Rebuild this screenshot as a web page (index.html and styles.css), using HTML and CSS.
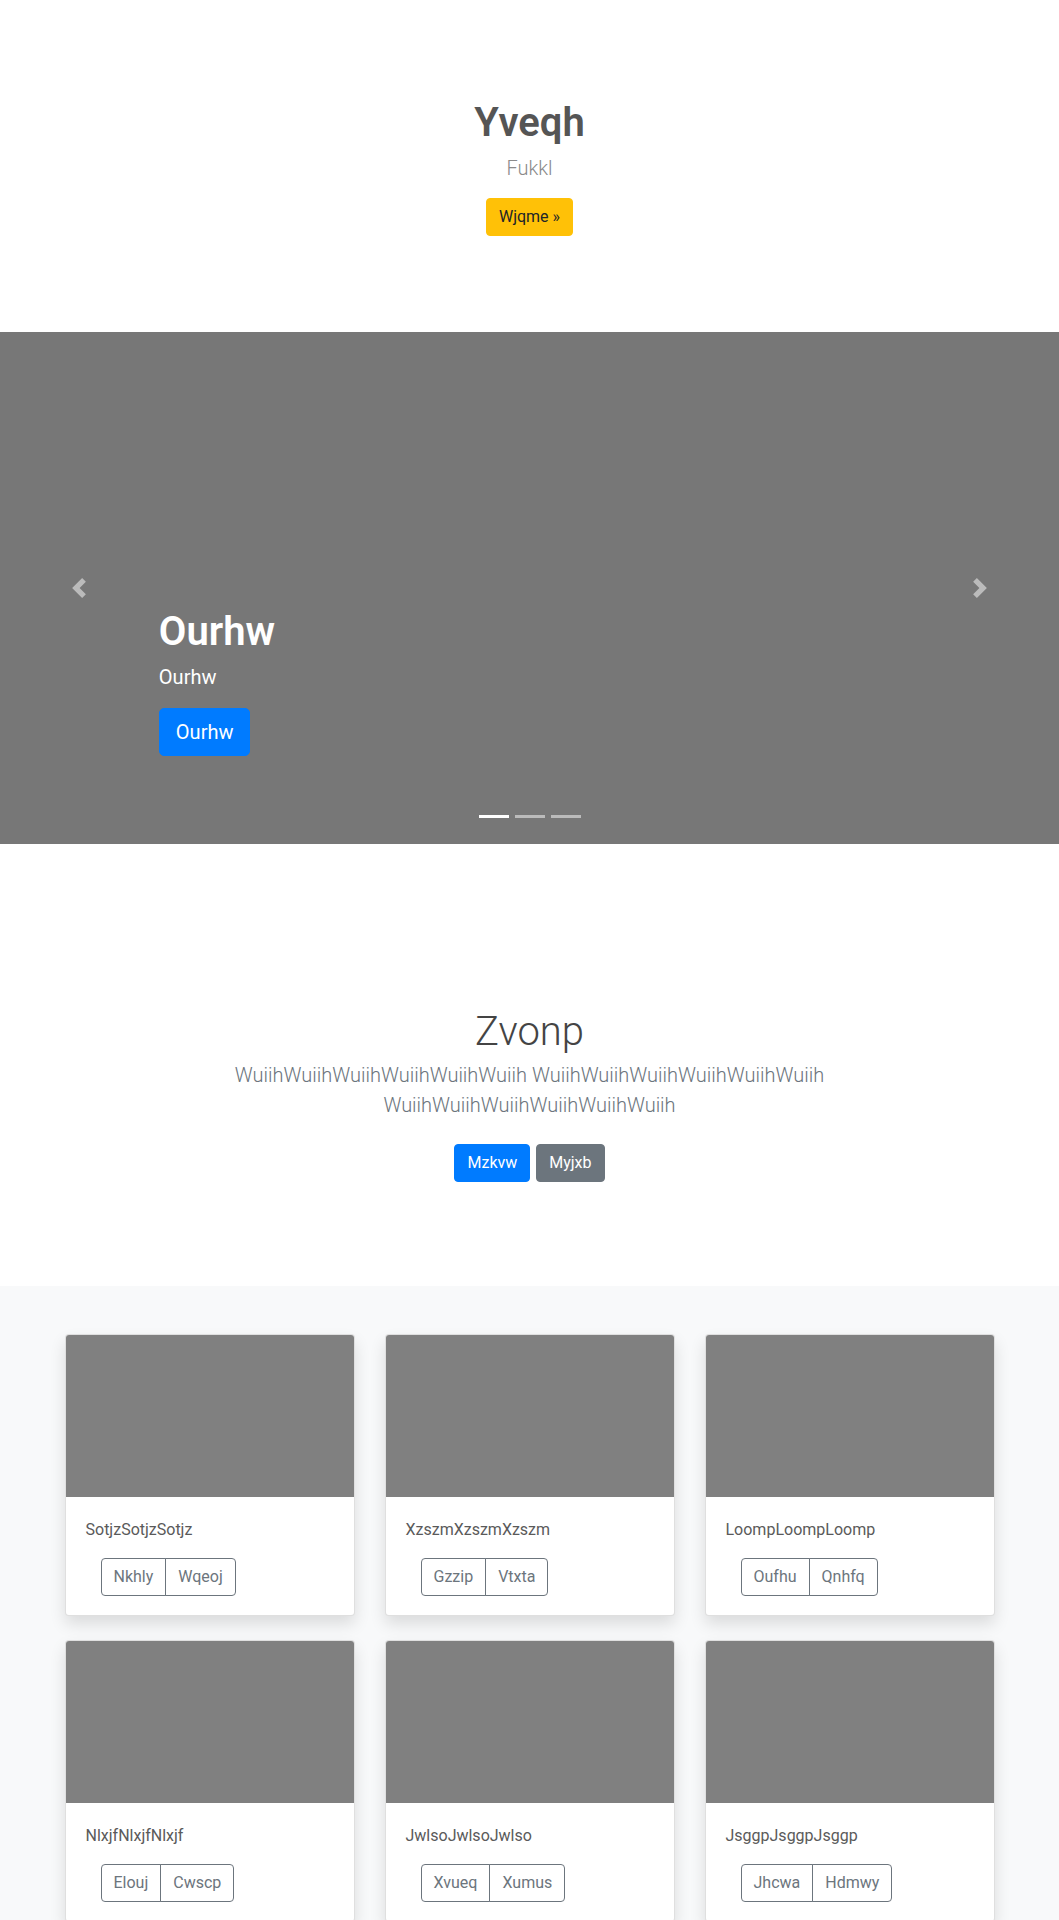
FILE: index.html
```html
<!DOCTYPE html>
<html lang="en">
<head>
<meta charset="utf-8">
<title>Yveqh</title>
<link rel="stylesheet" href="styles.css">
</head>
<body>
<header class="hero">
  <h1 class="hero-title">Yveqh</h1>
  <p class="hero-lead">Fukkl</p>
  <a class="btn btn-warning" href="#">Wjqme »</a>
</header>

<div class="carousel">
  <div class="carousel-slide"></div>
  <div class="carousel-caption">
    <h1 class="caption-title">Ourhw</h1>
    <p class="caption-text">Ourhw</p>
    <p class="caption-action"><a class="btn btn-lg btn-primary" href="#">Ourhw</a></p>
  </div>
  <a class="carousel-control prev" href="#">
    <svg width="20" height="20" viewBox="0 0 8 8" fill="#fff"><path d="M5.25 0l-4 4 4 4 1.5-1.5L4.25 4l2.5-2.5L5.25 0z"/></svg>
  </a>
  <a class="carousel-control next" href="#">
    <svg width="20" height="20" viewBox="0 0 8 8" fill="#fff"><path d="M2.75 0l-1.5 1.5L3.75 4l-2.5 2.5L2.75 8l4-4-4-4z"/></svg>
  </a>
  <ol class="carousel-indicators">
    <li class="active"></li>
    <li></li>
    <li></li>
  </ol>
</div>

<section class="intro">
  <div class="intro-inner">
    <h1 class="intro-title">Zvonp</h1>
    <p class="intro-lead">WuiihWuiihWuiihWuiihWuiihWuiih WuiihWuiihWuiihWuiihWuiihWuiih WuiihWuiihWuiihWuiihWuiihWuiih</p>
    <p class="intro-actions">
      <a class="btn btn-primary" href="#">Mzkvw</a>
      <a class="btn btn-secondary" href="#">Myjxb</a>
    </p>
  </div>
</section>

<section class="album">
  <div class="container">
    <div class="card-grid">
      <div class="card">
        <div class="card-img"></div>
        <div class="card-body">
          <p class="card-text">SotjzSotjzSotjz</p>
          <div class="btn-group"><a class="btn btn-outline" href="#">Nkhly</a><a class="btn btn-outline" href="#">Wqeoj</a></div>
        </div>
      </div>
      <div class="card">
        <div class="card-img"></div>
        <div class="card-body">
          <p class="card-text">XzszmXzszmXzszm</p>
          <div class="btn-group"><a class="btn btn-outline" href="#">Gzzip</a><a class="btn btn-outline" href="#">Vtxta</a></div>
        </div>
      </div>
      <div class="card">
        <div class="card-img"></div>
        <div class="card-body">
          <p class="card-text">LoompLoompLoomp</p>
          <div class="btn-group"><a class="btn btn-outline" href="#">Oufhu</a><a class="btn btn-outline" href="#">Qnhfq</a></div>
        </div>
      </div>
      <div class="card">
        <div class="card-img"></div>
        <div class="card-body">
          <p class="card-text">NlxjfNlxjfNlxjf</p>
          <div class="btn-group"><a class="btn btn-outline" href="#">Elouj</a><a class="btn btn-outline" href="#">Cwscp</a></div>
        </div>
      </div>
      <div class="card">
        <div class="card-img"></div>
        <div class="card-body">
          <p class="card-text">JwlsoJwlsoJwlso</p>
          <div class="btn-group"><a class="btn btn-outline" href="#">Xvueq</a><a class="btn btn-outline" href="#">Xumus</a></div>
        </div>
      </div>
      <div class="card">
        <div class="card-img"></div>
        <div class="card-body">
          <p class="card-text">JsggpJsggpJsggp</p>
          <div class="btn-group"><a class="btn btn-outline" href="#">Jhcwa</a><a class="btn btn-outline" href="#">Hdmwy</a></div>
        </div>
      </div>
    </div>
  </div>
</section>
</body>
</html>
```

FILE: styles.css
```css
* { box-sizing: border-box; }

body {
  margin: 0;
  font-family: Roboto, "Liberation Sans", sans-serif;
  font-size: 16px;
  line-height: 1.5;
  color: #212529;
  background: #fff;
}

h1, p { margin: 0; }

.btn {
  display: inline-block;
  font-weight: 400;
  font-size: 16px;
  line-height: 1.5;
  padding: 6px 12px;
  border: 1px solid transparent;
  border-radius: 4px;
  text-decoration: none;
  text-align: center;
  vertical-align: middle;
}
.btn-lg {
  font-size: 20px;
  padding: 8px 16px;
  border-radius: 5px;
}
.btn-warning { background: #ffc107; border-color: #ffc107; color: #212529; }
.btn-primary { background: #007bff; border-color: #007bff; color: #fff; }
.btn-secondary { background: #6c757d; border-color: #6c757d; color: #fff; }
.btn-outline { background: transparent; border-color: #6c757d; color: #6c757d; }

/* hero */
.hero {
  padding: 99px 15px 96px;
  text-align: center;
}
.hero-title {
  font-size: 40px;
  line-height: 1.2;
  font-weight: 600;
  color: #555;
  margin-bottom: 6px;
}
.hero-lead {
  font-size: 20px;
  font-weight: 300;
  line-height: 1.5;
  color: #8a8a8a;
  margin-bottom: 15px;
}

/* carousel */
.carousel {
  position: relative;
  height: 512px;
  overflow: hidden;
}
.carousel-slide {
  height: 100%;
  background: #777;
}
.carousel-caption {
  position: absolute;
  left: 15%;
  right: 15%;
  bottom: 52px;
  padding: 20px 0;
  color: #fff;
  text-align: left;
}
.caption-title {
  font-size: 40px;
  line-height: 1.2;
  font-weight: 600;
  margin-bottom: 6px;
}
.caption-text {
  font-size: 20px;
  line-height: 1.5;
  margin-bottom: 16px;
}
.caption-action { margin-bottom: 16px; }

.carousel-control {
  position: absolute;
  top: 0;
  bottom: 0;
  width: 15%;
  display: flex;
  align-items: center;
  justify-content: center;
  opacity: .5;
}
.carousel-control.prev { left: 0; }
.carousel-control.next { right: 0; }
.carousel-control svg { display: block; }

.carousel-indicators {
  position: absolute;
  left: 0;
  right: 0;
  bottom: 0;
  margin: 0 0 16px;
  padding: 0;
  list-style: none;
  display: flex;
  justify-content: center;
}
.carousel-indicators li {
  width: 30px;
  height: 3px;
  margin: 10px 3px;
  background: #fff;
  opacity: .5;
}
.carousel-indicators li.active { opacity: 1; }

/* intro */
.intro {
  padding: 164px 15px 96px;
  text-align: center;
}
.intro-inner {
  max-width: 610px;
  margin: 0 auto;
}
.intro-title {
  font-size: 40px;
  line-height: 1.2;
  font-weight: 300;
  color: #444;
  margin-bottom: 4px;
}
.intro-lead {
  font-size: 20px;
  line-height: 1.5;
  font-weight: 300;
  color: #6c757d;
  margin-bottom: 16px;
}
.intro-actions .btn { margin: 8px 1px; }

/* album */
.album {
  background: #f8f9fa;
  padding: 48px 0;
}
.container {
  max-width: 960px;
  margin: 0 auto;
  padding: 0 15px;
}
.card-grid {
  display: grid;
  grid-template-columns: repeat(3, 1fr);
  column-gap: 30px;
  row-gap: 24px;
}
.card {
  background: #fff;
  border: 1px solid rgba(0,0,0,.125);
  border-radius: 4px;
  box-shadow: 0 8px 16px rgba(0,0,0,.12);
  overflow: hidden;
}
.card-img {
  height: 162px;
  background: #808080;
}
.card-body { padding: 21px 20px 19px; }
.card-text {
  color: #5a5a5a;
  margin-bottom: 16px;
}
.btn-group {
  display: inline-flex;
  margin-left: 15px;
}
.btn-group .btn:first-child {
  border-top-right-radius: 0;
  border-bottom-right-radius: 0;
}
.btn-group .btn + .btn {
  margin-left: -1px;
  border-top-left-radius: 0;
  border-bottom-left-radius: 0;
}
```
